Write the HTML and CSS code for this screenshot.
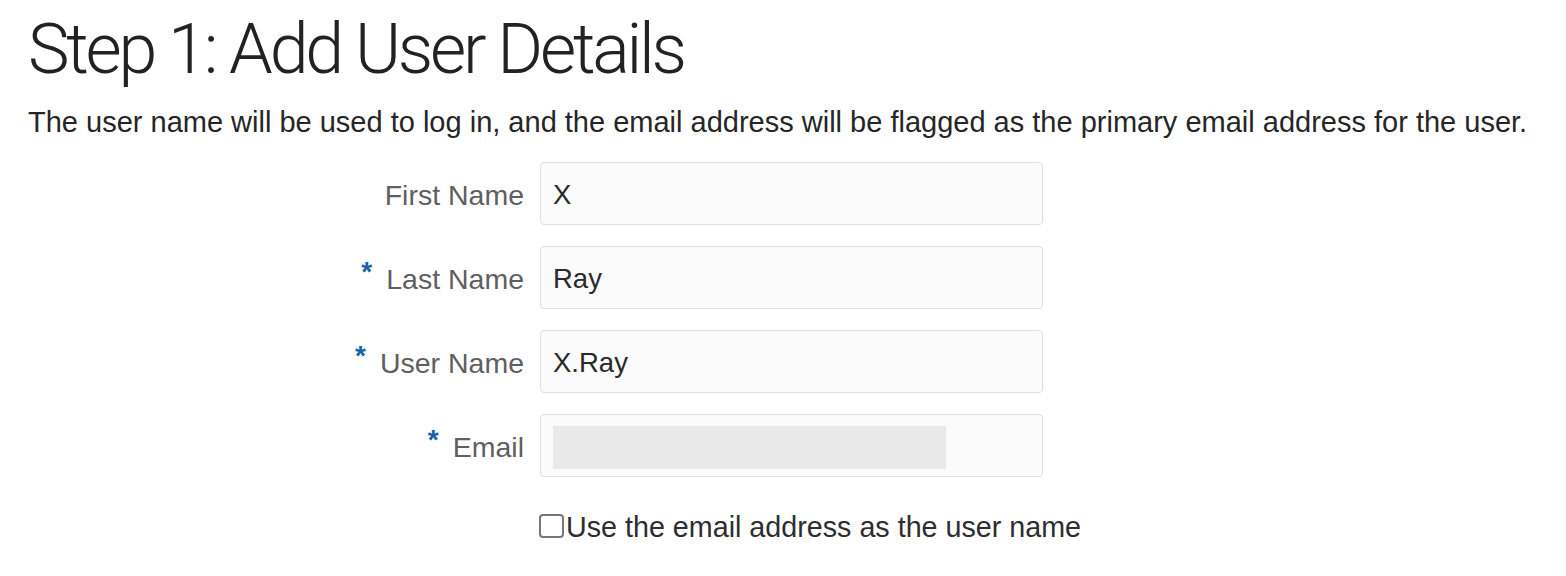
FILE: index.html
```html
<!DOCTYPE html>
<html>
<head>
<meta charset="utf-8">
<link rel="stylesheet" href="styles.css">
</head>
<body>
<div class="page">
  <h1 class="title">Step 1: Add User Details</h1>
  <p class="desc">The user name will be used to log in, and the email address will be flagged as the primary email address for the user.</p>
  <div class="form">
    <div class="row">
      <label class="label">First Name</label>
      <div class="field"><span class="value">X</span></div>
    </div>
    <div class="row">
      <label class="label"><span class="req">*</span>Last Name</label>
      <div class="field"><span class="value">Ray</span></div>
    </div>
    <div class="row">
      <label class="label"><span class="req">*</span>User Name</label>
      <div class="field"><span class="value">X.Ray</span></div>
    </div>
    <div class="row">
      <label class="label"><span class="req">*</span>Email</label>
      <div class="field"><span class="redact"></span></div>
    </div>
    <div class="row check-row">
      <div class="label"></div>
      <label class="check"><span class="box"></span>Use the email address as the user name</label>
    </div>
  </div>
</div>
</body>
</html>
```
FILE: styles.css
```css
html, body {
  margin: 0;
  padding: 0;
  background: #ffffff;
}
.page {
  padding: 0 0 0 28px;
  font-family: "Liberation Sans", Arial, sans-serif;
  color: #222222;
}
.title {
  margin: 0;
  padding-top: 9px;
  font-family: "Roboto", "Liberation Sans", sans-serif;
  font-weight: 300;
  font-size: 70px;
  line-height: 80px;
  letter-spacing: -3.2px;
  color: #222222;
}
.desc {
  margin: 16px 0 0 0;
  font-size: 29px;
  line-height: 34px;
  color: #262626;
}
.form {
  margin-top: 23px;
  display: flex;
  flex-direction: column;
  gap: 21px;
}
.row {
  display: flex;
  align-items: center;
}
.label {
  width: 512px;
  padding: 4px 16px 0 0;
  box-sizing: border-box;
  text-align: right;
  font-size: 28.5px;
  color: #5f5f5f;
  display: flex;
  justify-content: flex-end;
  align-items: center;
}
.req {
  color: #1565a6;
  font-size: 28px;
  font-weight: bold;
  position: relative;
  top: -8px;
  margin-right: 14px;
}
.field {
  width: 503px;
  height: 63px;
  box-sizing: border-box;
  border: 1.5px solid #e0e0e0;
  border-radius: 4px;
  background: #fbfbfb;
  display: flex;
  align-items: center;
  padding: 3px 0 0 12px;
}
.value {
  font-size: 27.5px;
  color: #2a2a2a;
}
.redact {
  display: block;
  width: 393px;
  height: 43px;
  background: #e9e9e9;
}
.check-row {
  margin-top: 9px;
}
.check {
  display: flex;
  align-items: center;
  font-size: 28.7px;
  line-height: 34px;
  color: #2e2e2e;
  padding-top: 3px;
}
.box {
  width: 25px;
  height: 24px;
  box-sizing: border-box;
  border: 2px solid #777;
  border-radius: 4px;
  margin: -3px 2px 0 -1px;
  background: #fff;
}
```
